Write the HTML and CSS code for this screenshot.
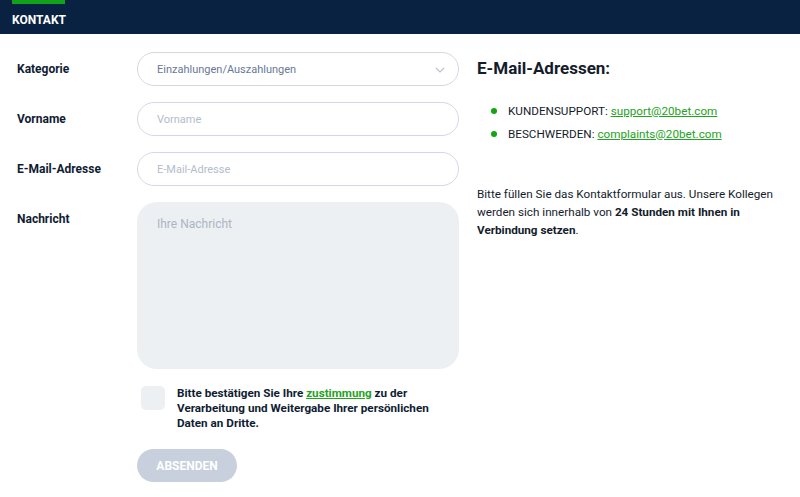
FILE: index.html
```html
<!DOCTYPE html>
<html lang="de">
<head>
<meta charset="utf-8">
<title>Kontakt</title>
<link rel="stylesheet" href="styles.css">
</head>
<body>
<header class="topbar">
  <div class="tab">
    <span class="tab-accent"></span>
    <span class="tab-label">KONTAKT</span>
  </div>
</header>
<main class="page">
  <form class="form">
    <div class="row">
      <label class="label">Kategorie</label>
      <div class="field select">
        <span class="select-value">Einzahlungen/Auszahlungen</span>
        <svg class="chevron" width="10" height="6" viewBox="0 0 10 6"><path d="M0.8 0.8 L5 5 L9.2 0.8" fill="none" stroke="#b7bfcc" stroke-width="1.2"/></svg>
      </div>
    </div>
    <div class="row">
      <label class="label">Vorname</label>
      <div class="field"><span class="placeholder">Vorname</span></div>
    </div>
    <div class="row">
      <label class="label">E-Mail-Adresse</label>
      <div class="field"><span class="placeholder">E-Mail-Adresse</span></div>
    </div>
    <div class="row">
      <label class="label">Nachricht</label>
      <div class="textarea"><span class="ta-placeholder">Ihre Nachricht</span></div>
    </div>
    <div class="consent">
      <span class="checkbox"></span>
      <p class="consent-text">Bitte bestätigen Sie Ihre <a class="link" href="#">zustimmung</a> zu der Verarbeitung und Weitergabe Ihrer persönlichen Daten an Dritte.</p>
    </div>
    <div class="actions">
      <button type="button" class="submit">ABSENDEN</button>
    </div>
  </form>
  <aside class="info">
    <h2 class="info-title">E-Mail-Adressen:</h2>
    <ul class="mail-list">
      <li>KUNDENSUPPORT: <a class="link" href="#">support@20bet.com</a></li>
      <li>BESCHWERDEN: <a class="link" href="#">complaints@20bet.com</a></li>
    </ul>
    <p class="info-text">Bitte füllen Sie das Kontaktformular aus. Unsere Kollegen werden sich innerhalb von <strong>24 Stunden mit Ihnen in Verbindung setzen</strong>.</p>
  </aside>
</main>
</body>
</html>
```
FILE: styles.css
```css
* { box-sizing: border-box; }
html, body { margin: 0; padding: 0; background: #fff; }
body {
  font-family: Roboto, "Liberation Sans", Arial, sans-serif;
  color: #0f1c33;
  width: 800px;
  height: 497px;
  overflow: hidden;
}
.topbar {
  background: #0a2241;
  height: 34px;
  padding-left: 12px;
}
.tab {
  display: flex;
  flex-direction: column;
  width: 52px;
}
.tab-accent {
  display: block;
  height: 4px;
  background: #12a11a;
  width: 53px;
}
.tab-label {
  color: #fff;
  font-weight: 700;
  font-size: 12px;
  line-height: 14px;
  margin-top: 9px;
  white-space: nowrap;
}
.page {
  display: flex;
  padding-top: 18px;
}
.form {
  width: 459px;
  padding-left: 17px;
  display: flex;
  flex-direction: column;
}
.row {
  display: flex;
  margin-bottom: 16px;
}
.label {
  width: 120px;
  font-size: 12px;
  font-weight: 700;
  color: #0f1c33;
  line-height: 34px;
  flex: none;
}
.field {
  width: 322px;
  height: 34px;
  border: 1px solid #d3d9e4;
  border-radius: 17px;
  display: flex;
  align-items: center;
  padding: 0 19px;
  font-size: 11px;
}
.select { justify-content: space-between; }
.select-value { color: #6a7896; }
.placeholder { color: #b4bccb; }
.chevron { margin-right: -6px; margin-top: 1px; }
.textarea {
  width: 322px;
  height: 167px;
  background: #edf0f3;
  border-radius: 20px;
  padding: 15px 20px;
  font-size: 12px;
}
.ta-placeholder { color: #acb5c4; }
.consent {
  display: flex;
  padding-left: 124px;
  margin-top: 1px;
}
.checkbox {
  width: 24px;
  height: 24px;
  background: #edf0f3;
  border-radius: 5px;
  flex: none;
}
.consent-text {
  margin: 0 0 0 12px;
  font-size: 11.7px;
  font-weight: 700;
  line-height: 15px;
  width: 270px;
  color: #0f1c33;
}
.link {
  color: #22a322;
  text-decoration: underline;
  font-weight: inherit;
}
.actions {
  padding-left: 120px;
  margin-top: 18px;
}
.submit {
  width: 100px;
  height: 33px;
  border: none;
  border-radius: 17px;
  background: #c7d0dc;
  color: #fff;
  font-family: inherit;
  font-weight: 700;
  font-size: 12px;
  padding: 0;
}
.info {
  padding-left: 18px;
  width: 341px;
}
.info-title {
  margin: 6px 0 0;
  font-size: 17px;
  line-height: 20px;
  font-weight: 700;
  color: #141c2b;
}
.mail-list {
  list-style: none;
  margin: 22px 0 0;
  padding: 0 0 0 31px;
  font-size: 11.7px;
  line-height: 23px;
  color: #141c2b;
}
.mail-list li { position: relative; }
.mail-list li::before {
  content: "";
  position: absolute;
  left: -17px;
  top: 8px;
  width: 6px;
  height: 6px;
  border-radius: 50%;
  background: #13a40f;
}
.mail-list .link { font-weight: 400; }
.info-text {
  margin: 39px 0 0;
  font-size: 11.7px;
  line-height: 18px;
  color: #141c2b;
}
```
